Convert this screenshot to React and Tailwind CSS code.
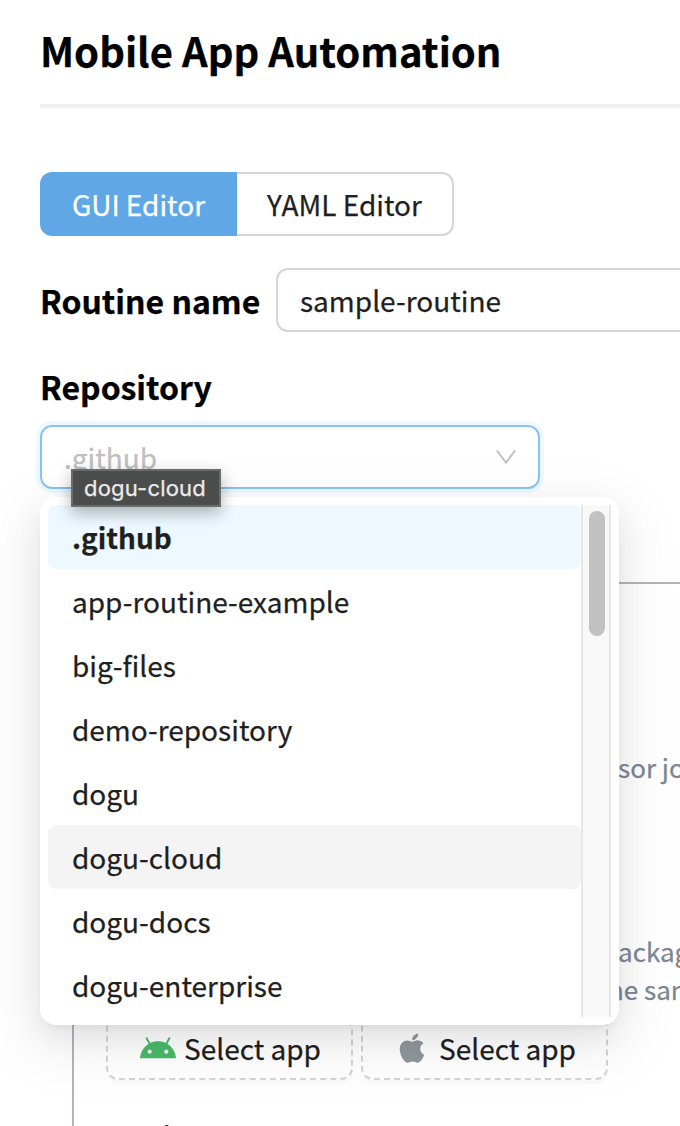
import React from "react";
import { AiFillApple } from "react-icons/ai";

const repositories = [
  ".github",
  "app-routine-example",
  "big-files",
  "demo-repository",
  "dogu",
  "dogu-cloud",
  "dogu-docs",
  "dogu-enterprise",
];

function AndroidIcon() {
  return (
    <svg className="block h-[22px] w-[36px] shrink-0" viewBox="0 0 36 22" fill="none">
      <path d="M0 21.2C.7 14.4 4.200 9.200 9.800 6.300 15 3.700 21 3.700 26.200 6.300 31.800 9.200 35.300 14.400 36 21.200Z" fill="#4aba68" />
      <path d="M6.200 .5 9.800 7M29.800 .5 26.200 7" stroke="#4aba68" strokeWidth="1.900" />
      <circle cx="9.700" cy="14.700" r="2.100" fill="#f3f3f3" />
      <circle cx="26.300" cy="14.700" r="2.100" fill="#f3f3f3" />
    </svg>
  );
}

function AppleIcon() {
  return <AiFillApple className="block h-[36px] w-[36px] shrink-0 text-[#90989b]" />;
}

function AppButton({ icon, className }) {
  return (
    <button className={`flex h-16 w-[247px] items-center rounded-xl border-2 border-dashed border-[#d5d5d5] shadow-[0_4px_0_rgba(0,0,0,0.02)] ${className}`}>
      {icon}
      <span className="whitespace-nowrap text-[28px] leading-[44px]">Select app</span>
    </button>
  );
}

function Dropdown() {
  return (
    <div className="absolute left-0 top-[72px] z-10 flex h-[528px] w-[579px] rounded-2xl bg-white p-2 shadow-[0_12px_32px_0_rgba(0,0,0,0.08),0_6px_12px_-8px_rgba(0,0,0,0.12),0_18px_56px_16px_rgba(0,0,0,0.05)]">
      <ul className="w-[533px]">
        {repositories.map((name) => (
          <li
            key={name}
            className={`h-16 rounded-lg px-6 text-[28px] leading-[64px] ${
              name === ".github" ? "bg-[#edf9ff] font-bold" : name === "dogu-cloud" ? "bg-[#f4f4f4]" : ""
            }`}
          >
            {name}
          </li>
        ))}
      </ul>
      <div className="h-[512px] w-[30px] border-x-2 border-[#e7e7e7] bg-[#f8f8f8] pl-[6px] pt-[6px]">
        <div className="h-[125px] w-4 rounded-full bg-[#c1c1c1]" />
      </div>
    </div>
  );
}

export default function App() {
  return (
    <div className="h-[1126px] w-[680px] overflow-hidden bg-white font-['Noto_Sans_CJK_KR',sans-serif] text-[#1f1f1f] [-webkit-text-stroke:0.25px]">
      <header className="ml-10 h-[108px] border-b-4 border-[#f0f0f0] pt-[18px]">
        <h1 className="whitespace-nowrap text-[40px] font-bold leading-[64px] text-black">Mobile App Automation</h1>
      </header>

      <main className="ml-10 pt-16">
        <div className="flex h-16 text-[28px] leading-[64px]">
          <button className="w-[197px] rounded-l-xl bg-[#60a7e6] text-center text-white">GUI Editor</button>
          <button className="w-[217px] rounded-r-xl border-2 border-l-0 border-[#d5d5d5] text-center leading-[60px]">YAML Editor</button>
        </div>

        <div className="mt-8 flex h-16 items-center">
          <label className="w-[236px] shrink-0 whitespace-nowrap text-[32px] font-bold leading-[64px] text-black">Routine name</label>
          <div className="h-16 w-[440px] shrink-0 rounded-xl border-2 border-[#d5d5d5] px-[22px] text-[28px] leading-[60px]">sample-routine</div>
        </div>

        <label className="mt-8 block h-[50px] text-[32px] font-bold leading-[44px] text-black">Repository</label>

        <div className="relative mt-[11px] h-16 w-[500px]">
          <div className="flex h-16 items-center justify-between rounded-xl border-2 border-[#88c4f3] pl-[22px] pr-[22px] shadow-[0_0_0_4px_#edf9ff]">
            <span className="text-[28px] leading-[60px] text-[#bfbfbf]">.github</span>
            <svg className="h-[14px] w-[20px]" viewBox="0 0 20 14" fill="none" stroke="#bfbfbf" strokeWidth="2">
              <path d="M.8.500 10 12.600 19.200.500" />
            </svg>
          </div>
          <Dropdown />
          <div className="absolute left-[31px] top-[44px] z-20 h-[38px] w-[150px] border-2 border-[#6a6b6b] bg-[#4b4c4c] pl-[11px] font-[Inter,sans-serif] text-[22px] leading-[34px] tracking-[0.2px] text-[#ebebeb] shadow-[0_6px_16px_rgba(0,0,0,0.3)]">
            dogu-cloud
          </div>
        </div>

        <section className="ml-8 mt-[93px] h-[600px] border-l-2 border-t-2 border-[#b3b3ba] pl-8">
          <p className="ml-[512px] mt-[164px] h-[38px] whitespace-nowrap text-[26px] leading-[38px] text-[#7b8794]">sor jobs</p>
          <div className="ml-[512px] mt-[146px] whitespace-nowrap text-[26px] leading-[38px] text-[#7b8794]">
            <p>ackage</p>
            <p className="-ml-[10px]">he same</p>
          </div>
          <div className="mt-[8px] flex gap-2">
            <AppButton className="gap-[8px] pl-8" icon={<AndroidIcon />} />
            <AppButton className="gap-[9px] pl-[31px]" icon={<AppleIcon />} />
          </div>
          <h2 className="mt-[34px] text-[30px] font-bold leading-[46px] text-black">Device</h2>
        </section>
      </main>
    </div>
  );
}
